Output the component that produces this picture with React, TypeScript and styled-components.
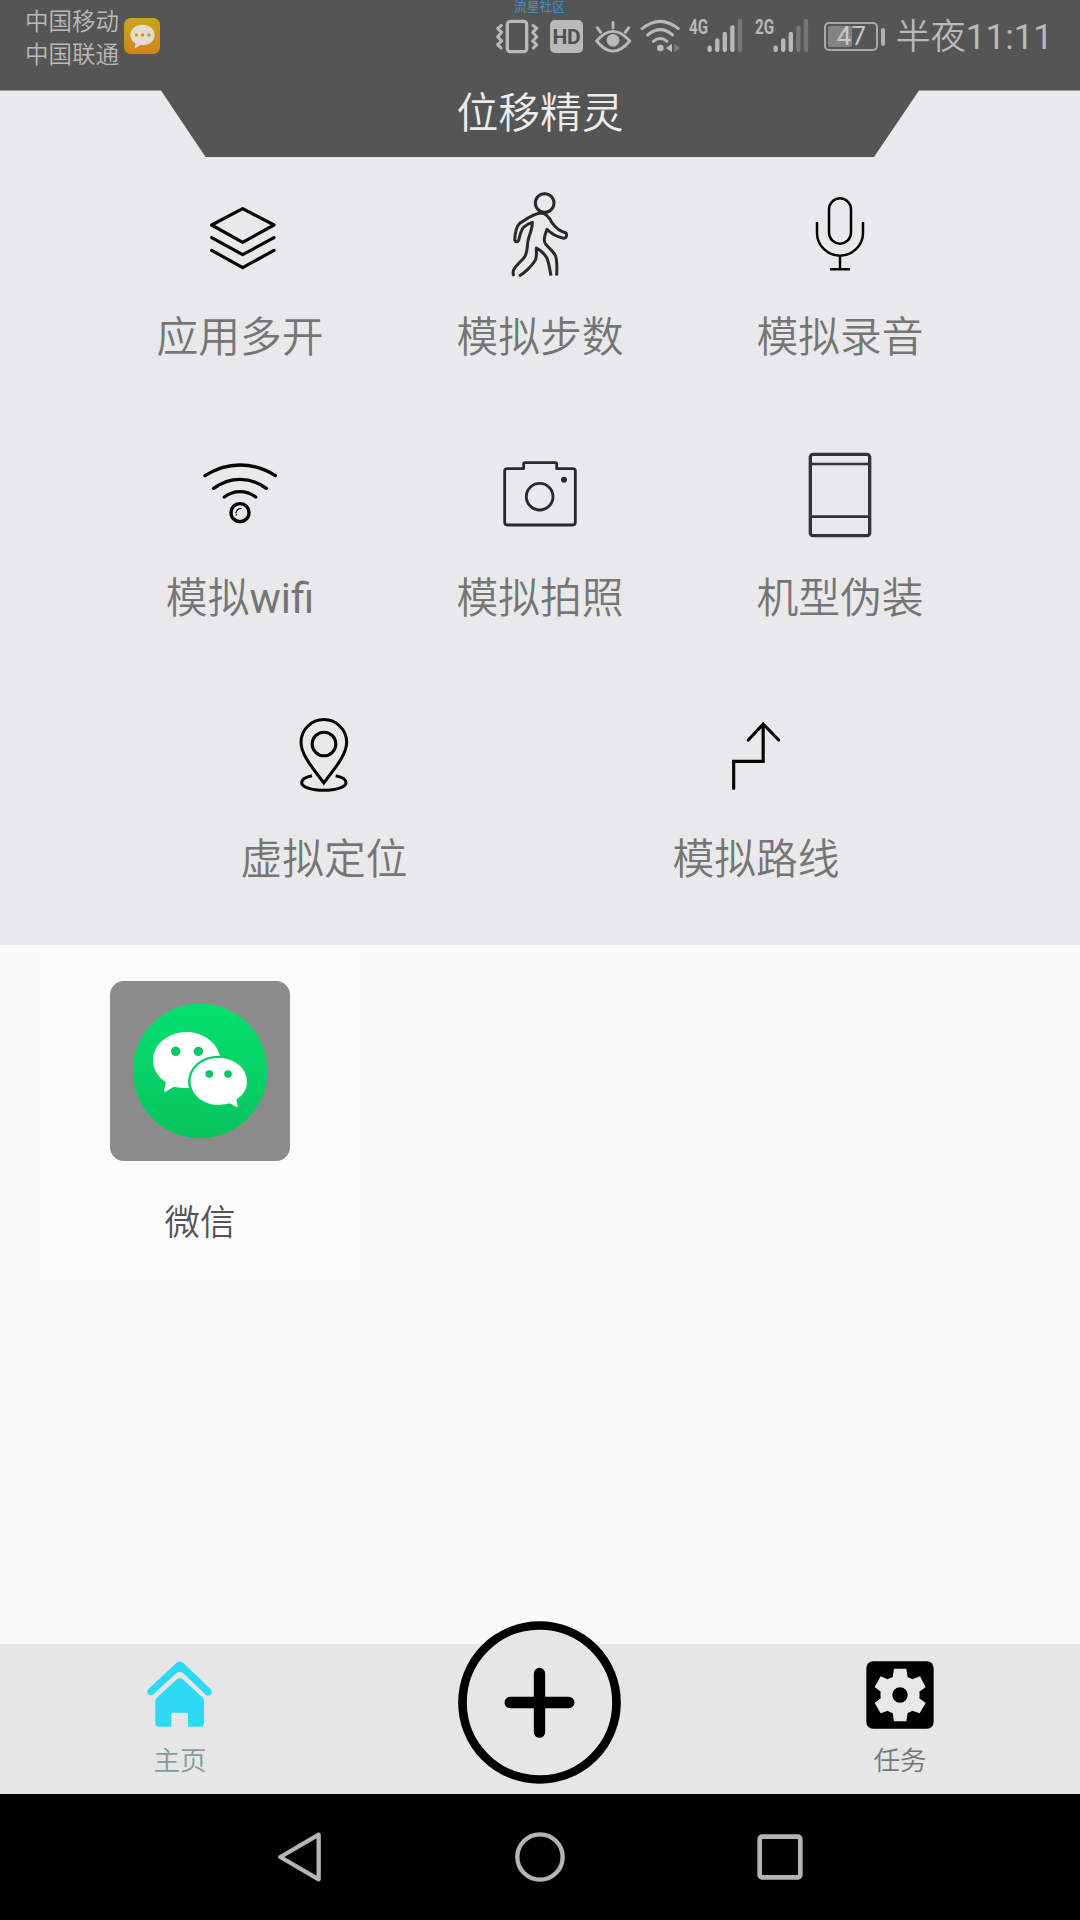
import React from "react";
import styled, { createGlobalStyle } from "styled-components";

const GlobalStyle = createGlobalStyle`
  * { box-sizing: border-box; }
  body {
    margin: 0;
    font-family: Roboto, "Noto Sans CJK SC DemiLight", "Noto Sans CJK SC", sans-serif;
    font-weight: 400;
  }
  svg { display: block; flex: none; }
`;

const Screen = styled.div`
  width: 1080px;
  height: 1920px;
  display: flex;
  flex-direction: column;
  background: #fafafa;
  overflow: hidden;
`;

const Header = styled.header`
  height: 157px;
  flex: none;
  position: relative;
  background: #555555;
  clip-path: polygon(0 0, 100% 0, 100% 90.5px, 919px 90.5px, 874px 100%, 205.5px 100%, 161px 90.5px, 0 90.5px);
`;

const HeaderBack = styled.div`
  background: #e9e9eb;
  flex: none;
`;

const StatusBar = styled.div`
  height: 74px;
  display: flex;
  justify-content: space-between;
  padding: 0 27px 0 25px;
  color: #b9b9b9;
`;

const StatusSide = styled.div`
  display: flex;
  align-items: flex-start;
`;

const Carriers = styled.div`
  display: flex;
  flex-direction: column;
  padding-top: 6px;
  margin-right: 5px;
  font-size: 23.5px;
  line-height: 33px;
`;

const MessageBadge = styled.div`
  margin-top: 18px;
`;

const Clock = styled.div`
  font-size: 35px;
  line-height: 76px;
  margin-left: 11px;
  white-space: nowrap;
`;

const Watermark = styled.div`
  position: absolute;
  top: -2px;
  left: 514px;
  font-size: 12.8px;
  line-height: 18px;
  color: #3b97dc;
`;

const Title = styled.h1`
  margin: 10px 0 0;
  text-align: center;
  font-size: 41.8px;
  line-height: 60px;
  font-weight: 400;
  color: #ececec;
`;

const Features = styled.section`
  height: 788px;
  flex: none;
  padding-top: 4px;
  background: #e9e9eb;
`;

const FeatureRow = styled.div<{ $inset: number }>`
  display: flex;
  height: 261px;
  padding: 0 ${(p) => p.$inset}px;
`;

const Feature = styled.div`
  flex: 1;
  display: flex;
  flex-direction: column;
  align-items: center;
  padding-top: 29px;
`;

const FeatureLabel = styled.span`
  margin-top: 28px;
  font-size: 41.8px;
  line-height: 60px;
  color: #757575;
`;

const AppArea = styled.main`
  flex: 1;
  display: flex;
  align-items: flex-start;
  padding: 0 40px;
`;

const AppCard = styled.div`
  width: 320px;
  height: 336px;
  display: flex;
  flex-direction: column;
  align-items: center;
  padding-top: 36px;
  background: #fbfbfb;
`;

const AppTile = styled.div`
  width: 180px;
  height: 180px;
  border-radius: 14px;
  background: #8c8c8c;
`;

const AppName = styled.span`
  margin-top: 37px;
  font-size: 35.5px;
  line-height: 50px;
  color: #555555;
`;

const TabBar = styled.nav`
  height: 150px;
  flex: none;
  display: flex;
  background: #e6e6e6;
`;

const Tab = styled.div`
  flex: 1;
  display: flex;
  flex-direction: column;
  align-items: center;
  padding-top: 16px;
`;

const TabLabel = styled.span<{ $color: string }>`
  margin-top: 9px;
  font-size: 26.6px;
  line-height: 40px;
  color: ${(p) => p.$color};
`;

const AddSlot = styled.div`
  flex: 1;
  display: flex;
  justify-content: center;
`;

const AddButton = styled.div`
  width: 163px;
  height: 163px;
  margin-top: -23px;
  margin-right: 1px;
`;

const SystemNav = styled.div`
  height: 126px;
  flex: none;
  display: flex;
  padding: 0 180px;
  background: #000;
`;

const NavKey = styled.div`
  flex: 1;
  display: flex;
  align-items: center;
  justify-content: center;
`;

type LineIconProps = {
  view: string;
  width: number;
  color?: string;
  round?: boolean;
  children: React.ReactNode;
};

const LineIcon = ({ view, width, color = "#050505", round = true, children }: LineIconProps) => (
  <svg
    width="90"
    height="90"
    viewBox={view}
    fill="none"
    stroke={color}
    strokeWidth={width}
    strokeLinecap={round ? "round" : "butt"}
    strokeLinejoin="round"
  >
    {children}
  </svg>
);

const LayersIcon = () => (
  <LineIcon view="165 30 270 270" width={9.5}>
    <path d="M308 86 402 135 308 187 215 135Z M215 173 308 224 402 173 M215 211 308 263 402 211" />
  </LineIcon>
);

const WalkIcon = () => (
  <LineIcon view="165 30 270 270" width={9} color="#2a2a2a" round={false}>
    <circle cx="314" cy="69" r="28" />
    <path d="M237 288C252 280 276 258 286 241C291 230 289 216 289 204C300 210 314 222 320 233C327 248 329 268 333 287M350 287C351 268 351 242 347 229C341 213 325 204 316 191C307 178 317 160 321 148C330 158 348 170 371 175C380 175 382 163 377 158C357 154 345 141 335 127C328 112 321 101 305 99C282 99 257 118 239 130C228 140 225 163 224 180C226 187 234 187 236 181C240 165 242 149 253 140C260 134 269 129 277 127C278 150 264 170 263 190C261 205 262 221 252 233C243 244 228 256 221 269C218 278 220 285 222 288" />
  </LineIcon>
);

const MicIcon = () => (
  <LineIcon view="1065 30 270 270" width={7.5} round={false}>
    <rect x="1167" y="55" width="66" height="136" rx="33" />
    <path d="M1131 126V158A69 69 0 0 0 1269 158V126M1200 227V268M1170 268H1230" />
  </LineIcon>
);

const WifiIcon = () => (
  <LineIcon view="165 33 270 270" width={10}>
    <path d="M195 107Q245 75 300 75Q358 75 406 107M221 145Q258 118 300 118Q343 118 379 145M253 171Q275 155 300 155Q325 155 347 171" />
    <circle cx="300" cy="218" r="27" />
    <path d="M288 218Q291 206 303 205M289 224V225" strokeWidth={4} />
  </LineIcon>
);

const CameraIcon = () => (
  <LineIcon view="165 33 270 270" width={8.5} color="#2a2a2c">
    <path d="M251 86V72Q251 68 255 68H346Q350 68 350 72V86H398Q406 86 406 94V247Q406 255 398 255H202Q194 255 194 247V94Q194 86 202 86Z" />
    <circle cx="299" cy="170" r="40" />
    <circle cx="372" cy="119" r="9" fill="#2a2a2c" stroke="none" />
  </LineIcon>
);

const PhoneIcon = () => (
  <LineIcon view="1065 33 270 270" width={10} color="#333336">
    <rect x="1111" y="43" width="178" height="244" rx="8" />
    <path d="M1111 72H1289M1111 230H1289" strokeWidth={8} />
  </LineIcon>
);

const PinIcon = () => (
  <LineIcon view="0 0 270 270" width={9} round={false}>
    <path
      d="M134.5 213C110 178 66 132 66 91A67.5 67.5 0 0 1 203 91C203 132 159 178 134.5 213Z"
      strokeLinejoin="miter"
    />
    <circle cx="135" cy="96" r="35.5" />
    <path d="M99 191C80 195 68 203 68 212C68 225 98 235 134.5 235C171 235 201 225 201 212C201 203 189 195 170 191" />
  </LineIcon>
);

const RouteIcon = () => (
  <LineIcon view="0 0 270 270" width={9.5}>
    <path d="M68 229V148H156.5V36M112 84 156.5 36 203 84" strokeLinejoin="miter" />
  </LineIcon>
);

const featureRows = [
  {
    inset: 90,
    items: [
      { label: "应用多开", Icon: LayersIcon },
      { label: "模拟步数", Icon: WalkIcon },
      { label: "模拟录音", Icon: MicIcon },
    ],
  },
  {
    inset: 90,
    items: [
      { label: "模拟wifi", Icon: WifiIcon },
      { label: "模拟拍照", Icon: CameraIcon },
      { label: "机型伪装", Icon: PhoneIcon },
    ],
  },
  {
    inset: 108,
    items: [
      { label: "虚拟定位", Icon: PinIcon },
      { label: "模拟路线", Icon: RouteIcon },
    ],
  },
];

const MessageIcon = () => (
  <svg width="36" height="36" viewBox="0 0 108 108">
    <defs>
      <linearGradient id="msg" x1="0" y1="0" x2="0" y2="1">
        <stop offset="0" stopColor="#c9a51c" />
        <stop offset="1" stopColor="#cf8420" />
      </linearGradient>
    </defs>
    <rect width="108" height="108" rx="20" fill="url(#msg)" />
    <path d="M55 20C34 20 19 33 19 51C19 62 25 71 34 76C34 82 33 86 32 91C40 88 45 84 49 81C75 84 92 70 92 51C92 33 76 20 55 20Z" fill="#e2dccb" />
    <g fill="#c8962a">
      <circle cx="37" cy="51" r="5" />
      <circle cx="56" cy="51" r="5" />
      <circle cx="75" cy="51" r="5" />
    </g>
  </svg>
);

const VibrateIcon = () => (
  <svg width="54" height="60" viewBox="45 0 162 180" fill="none" stroke="#b9b9b9">
    <rect x="82" y="64" width="58" height="91" rx="9" strokeWidth="10" />
    <path d="M64 76 53 85 65 97 53 110 65 123 53 134 63 144M159 76 170 85 158 97 170 110 158 123 170 134 160 144" strokeWidth="9" strokeLinejoin="round" strokeLinecap="round" />
  </svg>
);

const Hd = styled.div`
  width: 33px;
  height: 33px;
  margin: 20px 12px 0 1px;
  border-radius: 5px;
  background: #b9b9b9;
  color: #505050;
  font-size: 21px;
  font-weight: 700;
  line-height: 34px;
  text-align: center;
  letter-spacing: -0.5px;
`;

const EyeIcon = () => (
  <svg width="44" height="60" viewBox="345 0 132 180" fill="none" stroke="#b9b9b9" strokeWidth="8.5" strokeLinecap="round">
    <path d="M350 123Q399 65 449 123Q399 184 350 123ZM399 67V84M352 83 362 97M446 83 436 97" />
    <circle cx="399" cy="121" r="19" fill="#b9b9b9" stroke="none" />
  </svg>
);

const StatusWifiIcon = () => (
  <svg width="50" height="60" viewBox="477 0 150 180" fill="none" stroke="#b9b9b9" strokeWidth="9" strokeLinecap="round">
    <path d="M486 86Q541 42 595 86M503 105Q541 73 578 105M520 124Q541 107 561 124" />
    <circle cx="541" cy="144" r="10" fill="#b9b9b9" stroke="none" />
    <path d="M576 131V157L558 144Z" fill="#b9b9b9" stroke="none" />
    <path d="M583 131V157L600 144Z" fill="#7c7c7c" stroke="none" />
  </svg>
);

const Network = styled.div<{ $gap: number }>`
  display: flex;
  margin-right: ${(p) => p.$gap}px;
`;

const NetworkType = styled.span`
  width: 18px;
  margin-top: 17px;
  font-size: 20px;
  line-height: 20px;
  font-weight: 700;
  transform: scaleX(0.76);
  transform-origin: left center;
  white-space: nowrap;
`;

const SignalIcon = ({ level }: { level: number }) => (
  <svg width="36" height="60" viewBox="0 0 108 180" strokeWidth="13" strokeLinecap="round">
    {[143, 121, 102, 82, 63].map((top, i) => (
      <path key={top} d={`M${8 + i * 22.7} ${top}V150`} stroke={i < level ? "#b9b9b9" : "#777777"} />
    ))}
  </svg>
);

const Battery = styled.div`
  width: 54px;
  height: 29px;
  margin-top: 22px;
  padding: 2px;
  border: 2px solid #a9a9a9;
  border-radius: 5px;
`;

const BatteryFill = styled.div`
  width: 24px;
  height: 21px;
  background: #848484;
  border-radius: 2px;
  display: flex;
  align-items: center;
`;

const BatteryText = styled.span`
  padding-left: 9px;
  font-size: 26px;
  line-height: 21px;
  color: #c6c6c6;
`;

const BatteryTip = styled.div`
  width: 4px;
  height: 18px;
  margin: 28px 0 0 3px;
  border-radius: 2px;
  background: #b0b0b0;
`;

const WeChatIcon = () => (
  <svg width="180" height="180" viewBox="60 63 540 540">
    <defs>
      <linearGradient id="wx" x1="0" y1="0" x2="0" y2="1">
        <stop offset="0" stopColor="#05e06e" />
        <stop offset="1" stopColor="#07c45d" />
      </linearGradient>
    </defs>
    <circle cx="330.500" cy="333" r="202" fill="url(#wx)" />
    <path d="M290 216C234 216 189 254 189 301C189 328 204 351 227 366C228 378 221 386 222 395C231 396 241 385 252 380Q274 385 298 384Q330 350 391 291C382 248 339 216 290 216Z" fill="#fff" />
    <ellipse cx="386" cy="364" rx="92" ry="77" fill="#05d068" />
    <path d="M386 294C338 294 302 325 302 364C302 403 338 435 386 435Q404 434 420 430C429 434 436 441 443 442C445 434 438 427 440 418C460 405 471 387 471 364C471 325 434 294 386 294Z" fill="#fff" />
    <g fill="#05c864">
      <circle cx="257" cy="274" r="14" />
      <circle cx="325" cy="274" r="14" />
      <circle cx="358" cy="342" r="11.500" />
      <circle cx="414" cy="342" r="11.500" />
    </g>
  </svg>
);

const HomeIcon = () => (
  <svg width="72" height="72" viewBox="132 90 216 216">
    <path
      d="M229 99Q239 91 250 99L334 179Q338 186 334 193Q327 200 318 195L250 130Q239 122 229 130L160 193Q152 199 144 192Q139 184 145 177Z"
      fill="#2edaf3"
    />
    <path d="M229 149Q239 140 250 149L307 202Q312 207 312 213V279Q312 290 301 290H264V252Q264 248 260 248H218Q214 248 214 252V290H176Q166 290 166 280V213Q166 207 172 202Z" fill="#2edaf3" />
  </svg>
);

const GearIcon = () => (
  <svg width="72" height="72" viewBox="432 90 216 216">
    <rect x="439" y="94" width="202" height="202" rx="20" fill="#000" />
    <path
      d="M522 116H559L563 142Q571 144 577 148L600 139L617 171L598 185Q600 195 598 205L617 219L599 250L577 242Q571 246 563 249L559 274H522L518 249Q510 247 503 242L482 250L464 219L482 205Q481 195 482 185L464 171L482 139L503 148Q510 144 518 142Z"
      fill="#e8e8e8"
    />
    <circle cx="540" cy="195" r="23" fill="#000" />
  </svg>
);

const PlusIcon = () => (
  <svg width="163" height="163" viewBox="0 0 489 489">
    <circle cx="244.500" cy="244.500" r="231" fill="#e6e6e6" stroke="#000" strokeWidth="26" />
    <path d="M156.500 244.500H332.500M244.500 157.500V333.500" stroke="#000" strokeWidth="34" strokeLinecap="round" />
  </svg>
);

export default function App() {
  return (
    <>
      <GlobalStyle />
      <Screen>
        <HeaderBack>
          <Header>
            <StatusBar>
              <StatusSide>
                <Carriers>
                  <span>中国移动</span>
                  <span>中国联通</span>
                </Carriers>
                <MessageBadge>
                  <MessageIcon />
                </MessageBadge>
              </StatusSide>
              <StatusSide>
                <VibrateIcon />
                <Hd>HD</Hd>
                <EyeIcon />
                <StatusWifiIcon />
                <Network $gap={12}>
                  <NetworkType>4G</NetworkType>
                  <SignalIcon level={4} />
                </Network>
                <Network $gap={15}>
                  <NetworkType>2G</NetworkType>
                  <SignalIcon level={3} />
                </Network>
                <Battery>
                  <BatteryFill>
                    <BatteryText>47</BatteryText>
                  </BatteryFill>
                </Battery>
                <BatteryTip />
                <Clock>半夜11:11</Clock>
              </StatusSide>
            </StatusBar>
            <Watermark>流星社区</Watermark>
            <Title>位移精灵</Title>
          </Header>
        </HeaderBack>

        <Features>
          {featureRows.map((row, i) => (
            <FeatureRow key={i} $inset={row.inset}>
              {row.items.map(({ label, Icon }) => (
                <Feature key={label}>
                  <Icon />
                  <FeatureLabel>{label}</FeatureLabel>
                </Feature>
              ))}
            </FeatureRow>
          ))}
        </Features>

        <AppArea>
          <AppCard>
            <AppTile>
              <WeChatIcon />
            </AppTile>
            <AppName>微信</AppName>
          </AppCard>
        </AppArea>

        <TabBar>
          <Tab>
            <HomeIcon />
            <TabLabel $color="#7d9e9e">主页</TabLabel>
          </Tab>
          <AddSlot>
            <AddButton>
              <PlusIcon />
            </AddButton>
          </AddSlot>
          <Tab>
            <GearIcon />
            <TabLabel $color="#757575">任务</TabLabel>
          </Tab>
        </TabBar>

        <SystemNav>
          <NavKey>
            <svg width="50" height="50" viewBox="0 0 150 150" fill="none" stroke="#b4b4b4" strokeWidth="13" strokeLinejoin="round">
              <path d="M16 75 131 8V142Z" />
            </svg>
          </NavKey>
          <NavKey>
            <svg width="50" height="50" viewBox="0 0 150 150" fill="none" stroke="#b4b4b4" strokeWidth="13">
              <circle cx="75" cy="75" r="68" />
            </svg>
          </NavKey>
          <NavKey>
            <svg width="50" height="50" viewBox="0 0 150 150" fill="none" stroke="#b4b4b4" strokeWidth="14">
              <rect x="14" y="14" width="122" height="122" rx="7" />
            </svg>
          </NavKey>
        </SystemNav>
      </Screen>
    </>
  );
}
